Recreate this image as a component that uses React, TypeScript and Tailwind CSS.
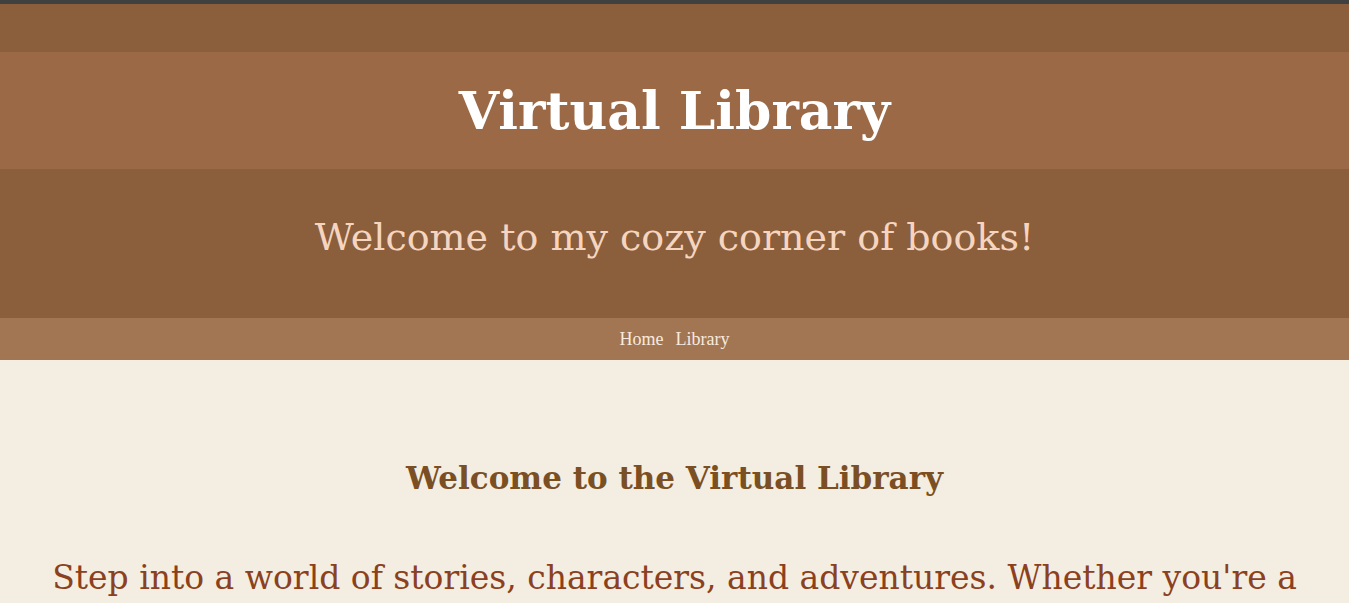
const serif = "font-['DejaVu_Serif','Liberation_Serif',serif]";

function Header() {
  return (
    <header className="border-t-4 border-[#3f4040] bg-[#8b5e3c] pt-12">
      <h1
        className={`${serif} bg-[#9b6946] py-[25px] text-center text-[52px] leading-[67px] font-bold text-white`}
      >
        Virtual Library
      </h1>
      <p
        className={`${serif} flex h-[149px] items-center justify-center pb-[12px] text-[38px] text-[#f5d5c0]`}
      >
        Welcome to my cozy corner of books!
      </p>
    </header>
  );
}

function Nav() {
  return (
    <nav className="flex h-[42px] items-center justify-center gap-[12px] bg-[#a27653] font-['Liberation_Serif',serif] text-[18px] text-[#f8eadf]">
      <a href="#home">Home</a>
      <a href="#library">Library</a>
    </nav>
  );
}

export default function App() {
  return (
    <div className="min-h-screen bg-[#f3eee1]">
      <Header />
      <Nav />
      <main className="px-10 pt-[96px] text-center">
        <h2 className={`${serif} text-[31px] leading-[44px] font-bold text-[#7b4f24]`}>
          Welcome to the Virtual Library
        </h2>
        <p className={`${serif} mt-[55px] text-[33px] leading-[46px] text-[#8b4020]`}>
          Step into a world of stories, characters, and adventures. Whether you're a
          book lover or simply looking for your next great read, there's a shelf here
          waiting just for you.
        </p>
      </main>
    </div>
  );
}
